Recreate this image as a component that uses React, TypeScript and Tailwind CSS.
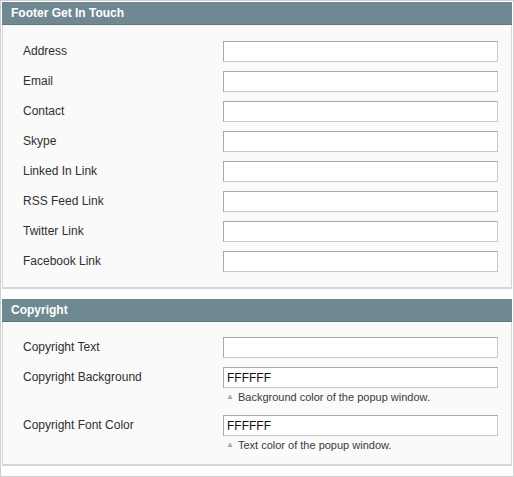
import React from "react";

const font = { fontFamily: '"Liberation Sans", Arial, sans-serif' };

function SectionHead({ title }: { title: string }) {
  return (
    <div className="h-[23px] bg-[#6f8992] border-b border-[#5f7880] pl-[9px] flex items-center">
      <h4 className="text-white text-[12px] font-bold leading-none">{title}</h4>
    </div>
  );
}

function Field({ label, value, note }: { label: string; value?: string; note?: string }) {
  return (
    <div className="flex">
      <div className="w-[220px] pl-[20px] h-[20px] flex items-center text-[12px] text-[#2f2f2f]">
        {label}
      </div>
      <div className="w-[275px]">
        <div className="h-[21px] bg-white border border-t-[#aaa] border-l-[#aaa] border-r-[#c8c8c8] border-b-[#c8c8c8] px-[3px] flex items-center text-[12px] text-[#111]">
          {value}
        </div>
        {note && (
          <div className="flex items-center h-[14px] mt-[2px] text-[11px] text-[#3a3a3a]">
            <span className="text-[#a8a8a8] text-[8px] ml-[3px] mr-[4px]">▲</span>
            {note}
          </div>
        )}
      </div>
    </div>
  );
}

export default function App() {
  const links = [
    "Address",
    "Email",
    "Contact",
    "Skype",
    "Linked In Link",
    "RSS Feed Link",
    "Twitter Link",
    "Facebook Link",
  ];
  return (
    <div style={font} className="w-[514px] h-[477px] bg-white border border-[#cfcfcf] p-px">
      <SectionHead title="Footer Get In Touch" />
      <div className="bg-[#fafafa] border-x border-b-2 border-[#d6d6d6] pt-[16px] pb-[15px] flex flex-col gap-[9px]">
        {links.map((l) => (
          <Field key={l} label={l} />
        ))}
      </div>
      <div className="h-[10px]" />
      <SectionHead title="Copyright" />
      <div className="bg-[#fafafa] border-x border-b-2 border-[#d6d6d6] pt-[15px] pb-[12px] flex flex-col">
        <Field label="Copyright Text" />
        <div className="mt-[9px]">
          <Field label="Copyright Background" value="FFFFFF" note="Background color of the popup window." />
        </div>
        <div className="mt-[11px]">
          <Field label="Copyright Font Color" value="FFFFFF" note="Text color of the popup window." />
        </div>
      </div>
    </div>
  );
}
